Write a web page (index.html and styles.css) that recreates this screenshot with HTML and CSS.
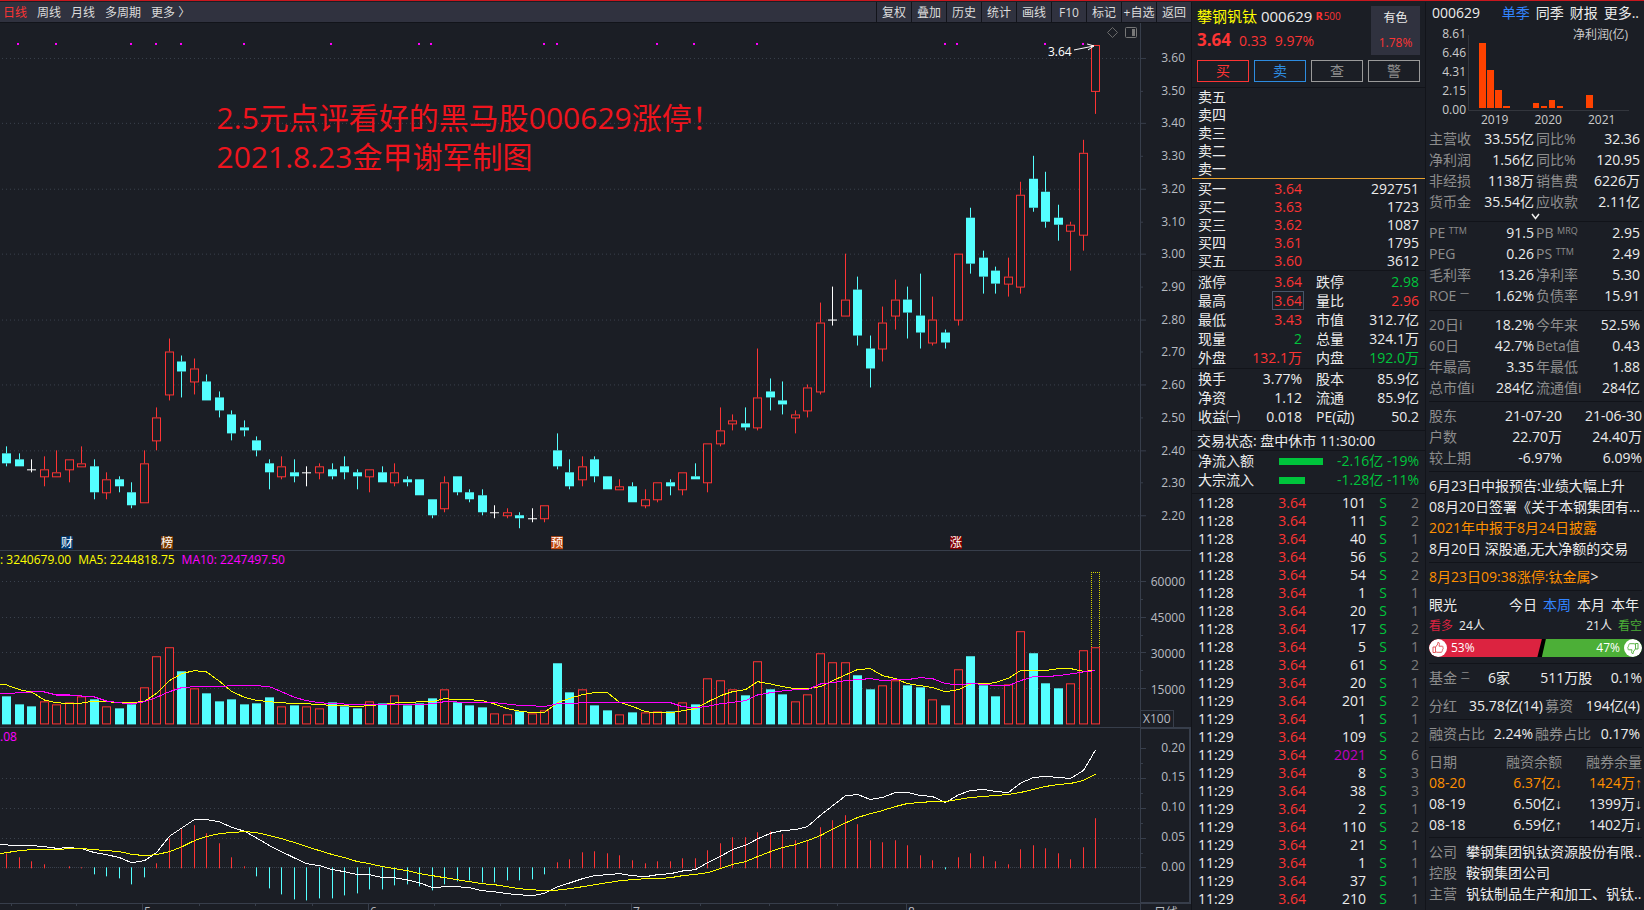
FILE: index.html
```html
<!DOCTYPE html>
<html lang="zh-CN">
<head>
<meta charset="utf-8">
<meta name="viewport" content="width=device-width, initial-scale=1">
<title>攀钢钒钛 000629</title>
<link rel="stylesheet" href="styles.css">
</head>
<body>
<main class="app">
  <section class="charts">
    <nav class="toolbar">
      <div class="periods">
        <button class="period active" type="button">日线</button>
        <button class="period" type="button">周线</button>
        <button class="period" type="button">月线</button>
        <button class="period" type="button">多周期</button>
        <button class="period" type="button">更多 〉</button>
      </div>
      <div class="tools">
        <button class="tool" type="button">复权</button>
        <button class="tool" type="button">叠加</button>
        <button class="tool" type="button">历史</button>
        <button class="tool" type="button">统计</button>
        <button class="tool" type="button">画线</button>
        <button class="tool" type="button">F10</button>
        <button class="tool" type="button">标记</button>
        <button class="tool" type="button">+自选</button>
        <button class="tool" type="button">返回</button>
      </div>
    </nav>

    <div class="panel panel-price">
      <div class="plot">
        <svg id="price" class="canvas" viewBox="0 0 1140 528" preserveAspectRatio="none"></svg>
        <p class="note">2.5元点评看好的黑马股000629涨停！<br>2021.8.23金甲谢军制图</p>
      </div>
      <ol class="axis axis-price">
        <li>3.60</li><li>3.50</li><li>3.40</li><li>3.30</li><li>3.20</li><li>3.10</li><li>3.00</li><li>2.90</li><li>2.80</li><li>2.70</li><li>2.60</li><li>2.50</li><li>2.40</li><li>2.30</li><li>2.20</li>
      </ol>
    </div>

    <div class="panel panel-volume">
      <div class="plot">
        <svg id="volume" class="canvas" viewBox="0 0 1140 175" preserveAspectRatio="none"></svg>
        <p class="legend"><span>: 3240679.00</span><span>MA5: 2244818.75</span><span class="magenta">MA10: 2247497.50</span></p>
      </div>
      <div class="axis-stack">
        <ol class="axis axis-volume">
          <li>60000</li><li>45000</li><li>30000</li><li>15000</li>
        </ol>
        <span class="unit">X100</span>
      </div>
    </div>

    <div class="panel panel-macd">
      <div class="plot">
        <svg id="macd" class="canvas" viewBox="0 0 1140 175" preserveAspectRatio="none"></svg>
        <p class="legend"><span class="magenta">.08</span></p>
      </div>
      <ol class="axis axis-macd">
        <li>0.20</li><li>0.15</li><li>0.10</li><li>0.05</li><li>0.00</li>
      </ol>
    </div>

    <div class="timeline">
      <svg id="time" class="time-canvas" viewBox="0 0 1140 6" preserveAspectRatio="none"></svg>
      <span class="time-unit">日线</span>
    </div>
  </section>

  <section class="quote">
    <header class="quote-head">
      <div class="head-main">
        <h1 class="name">攀钢钒钛 <span class="code">000629</span><span class="flag"><b>R</b>500</span></h1>
        <p class="last"><strong>3.64</strong><span>0.33</span><span>9.97%</span></p>
      </div>
      <div class="sector"><span>有色</span><span class="up">1.78%</span></div>
      <div class="actions">
        <button class="act buy" type="button">买</button>
        <button class="act sell" type="button">卖</button>
        <button class="act" type="button">查</button>
        <button class="act" type="button">警</button>
      </div>
    </header>

    <table class="book asks">
      <tr><th>卖五</th></tr><tr><th>卖四</th></tr><tr><th>卖三</th></tr><tr><th>卖二</th></tr><tr><th>卖一</th></tr>
    </table>
    <table class="book bids">
      <tr><th>买一</th><td class="up">3.64</td><td>292751</td></tr>
      <tr><th>买二</th><td class="up">3.63</td><td>1723</td></tr>
      <tr><th>买三</th><td class="up">3.62</td><td>1087</td></tr>
      <tr><th>买四</th><td class="up">3.61</td><td>1795</td></tr>
      <tr><th>买五</th><td class="up">3.60</td><td>3612</td></tr>
    </table>

    <dl class="stats">
      <dt>涨停</dt><dd class="up">3.64</dd><dt>跌停</dt><dd class="down">2.98</dd>
      <dt>最高</dt><dd class="up"><span class="boxed">3.64</span></dd><dt>量比</dt><dd class="up">2.96</dd>
      <dt>最低</dt><dd class="up">3.43</dd><dt>市值</dt><dd>312.7亿</dd>
      <dt>现量</dt><dd class="down">2</dd><dt>总量</dt><dd>324.1万</dd>
      <dt>外盘</dt><dd class="up">132.1万</dd><dt>内盘</dt><dd class="down">192.0万</dd>
    </dl>
    <dl class="stats stats-loose">
      <dt>换手</dt><dd>3.77%</dd><dt>股本</dt><dd>85.9亿</dd>
      <dt>净资</dt><dd>1.12</dd><dt>流通</dt><dd>85.9亿</dd>
      <dt>收益㈠</dt><dd>0.018</dd><dt>PE(动)</dt><dd>50.2</dd>
    </dl>
    <p class="status">交易状态: 盘中休市 11:30:00</p>
    <table class="flows">
      <tr><th>净流入额</th><td class="meter-cell"><span class="meter" style="width:44px"></span></td><td class="down">-2.16亿 -19%</td></tr>
      <tr><th>大宗流入</th><td class="meter-cell"><span class="meter" style="width:26px"></span></td><td class="down">-1.28亿 -11%</td></tr>
    </table>
    <table class="ticks">
      <colgroup><col class="c-time"><col class="c-price"><col class="c-vol"><col class="c-side"><col class="c-num"></colgroup>
      <tbody id="ticks"></tbody>
    </table>
  </section>

  <aside class="finance">
    <header class="fin-head">
      <span class="fin-code">000629</span>
      <nav class="fin-tabs"><a class="active" href="#q">单季</a><a href="#y">同季</a><a href="#r">财报</a><a href="#m">更多..</a></nav>
    </header>
    <div class="profit">
      <ol class="profit-axis"><li>8.61</li><li>6.46</li><li>4.31</li><li>2.15</li><li>0.00</li></ol>
      <div class="profit-body">
        <span class="profit-title">净利润(亿)</span>
        <svg class="profit-bars" viewBox="0 0 162 76" preserveAspectRatio="none">
          <path d="M.5 0V75.5H161" fill="none" stroke="#33363d"/>
          <path d="M11 8h7v65h-7zM19 35h7v38h-7zM27 55h7v18h-7zM35 71h7v2h-7zM65 68h6v5h-6zM73 71h6v2h-6zM81 65h6v8h-6zM89 71h6v2h-6zM118 60h7v13h-7z" fill="#ff4200"/>
        </svg>
        <div class="years"><span>2019</span><span>2020</span><span>2021</span></div>
      </div>
    </div>

    <dl class="kv first">
      <dt>主营收</dt><dd>33.55亿</dd><dt>同比%</dt><dd>32.36</dd>
      <dt>净利润</dt><dd>1.56亿</dd><dt>同比%</dt><dd>120.95</dd>
      <dt>非经损</dt><dd>1138万</dd><dt>销售费</dt><dd>6226万</dd>
      <dt>货币金</dt><dd>35.54亿</dd><dt>应收款</dt><dd>2.11亿</dd>
    </dl>
    <button class="more" type="button" aria-label="展开">
      <svg width="9" height="7" viewBox="0 0 9 7"><path d="M1 1l3.500 4.500L8 1" fill="none" stroke="#eee" stroke-width="1.500"/></svg>
    </button>
    <dl class="kv tight">
      <dt>PE <sup>TTM</sup></dt><dd>91.5</dd><dt>PB <sup>MRQ</sup></dt><dd>2.95</dd>
      <dt>PEG</dt><dd>0.26</dd><dt>PS <sup>TTM</sup></dt><dd>2.49</dd>
      <dt>毛利率</dt><dd>13.26</dd><dt>净利率</dt><dd>5.30</dd>
      <dt>ROE <sup>一</sup></dt><dd>1.62%</dd><dt>负债率</dt><dd>15.91</dd>
    </dl>
    <dl class="kv">
      <dt>20日i</dt><dd>18.2%</dd><dt>今年来</dt><dd>52.5%</dd>
      <dt>60日</dt><dd>42.7%</dd><dt>Beta值</dt><dd>0.43</dd>
      <dt>年最高</dt><dd>3.35</dd><dt>年最低</dt><dd>1.88</dd>
      <dt>总市值i</dt><dd>284亿</dd><dt>流通值i</dt><dd>284亿</dd>
    </dl>
    <table class="grid3">
      <tr><th>股东</th><td>21-07-20</td><td>21-06-30</td></tr>
      <tr><th>户数</th><td>22.70万</td><td>24.40万</td></tr>
      <tr><th>较上期</th><td>-6.97%</td><td>6.09%</td></tr>
    </table>
    <ul class="news">
      <li><a href="#n1">6月23日中报预告:业绩大幅上升</a></li>
      <li><a href="#n2">08月20日签署《关于本钢集团有...</a></li>
      <li><a class="hot" href="#n3">2021年中报于8月24日披露</a></li>
      <li><a href="#n4">8月20日 深股通,无大净额的交易</a></li>
    </ul>
    <p class="block"><a class="hot" href="#n5">8月23日09:38涨停:钛金属<span class="plain">&gt;</span></a></p>
    <div class="block sentiment">
      <div class="line"><span>眼光</span><nav class="spans"><a href="#d">今日</a><a class="active" href="#w">本周</a><a href="#mo">本月</a><a href="#yr">本年</a></nav></div>
      <div class="line votes"><span><b class="bull">看多</b>&ensp;24人</span><span>21人&ensp;<b class="bear">看空</b></span></div>
      <div class="poll">
        <span class="poll-side poll-bull" style="flex-grow:53">
          <svg width="18" height="18" viewBox="0 0 18 18"><circle cx="9" cy="9" r="9" fill="#fff"/><path d="M4 8h2.500v5.500H4zM6.500 8.200L8.800 5V3.500c1.700-.4 2 1 1.200 3.700h3.200c1 0 1 1 .7 1.600.5.500.3 1.200-.2 1.500.3.600 0 1.200-.5 1.400.1.800-.3 1.600-1.200 1.600H8l-1.500-.6" fill="none" stroke="#e0484e" stroke-width=".9"/></svg>
          53%
        </span>
        <span class="poll-side poll-bear" style="flex-grow:47">
          47%
          <svg width="18" height="18" viewBox="0 0 18 18"><circle cx="9" cy="9" r="9" fill="#fff"/><path d="M14 10h-2.500V4.500H14zM11.500 9.800L9.200 13v1.500c-1.700.4-2-1-1.200-3.700H4.800c-1 0-1-1-.7-1.600-.5-.5-.3-1.200.2-1.500-.3-.6 0-1.200.5-1.400-.1-.8.300-1.600 1.200-1.600h4l1.500.6" fill="none" stroke="#4caf37" stroke-width=".9"/></svg>
        </span>
      </div>
    </div>
    <div class="block line"><span class="dim">基金 <sup>二</sup></span><span class="fund-n">6家</span><span>511万股</span><span>0.1%</span></div>
    <div class="block pairs pairs-a"><span class="dim">分红</span><span>35.78亿(14)</span><span class="dim">募资</span><span>194亿(4)</span></div>
    <div class="block pairs pairs-b"><span class="dim">融资占比</span><span>2.24%</span><span class="dim">融券占比</span><span>0.17%</span></div>
    <table class="grid3 margin">
      <tr class="dim"><th>日期</th><td>融资余额</td><td>融券余量</td></tr>
      <tr class="hot"><th>08-20</th><td>6.37亿↓</td><td>1424万↑</td></tr>
      <tr class="lit"><th>08-19</th><td>6.50亿↓</td><td>1399万↓</td></tr>
      <tr class="lit"><th>08-18</th><td>6.59亿↑</td><td>1402万↓</td></tr>
    </table>
    <dl class="about">
      <dt>公司</dt><dd>攀钢集团钒钛资源股份有限..</dd>
      <dt>控股</dt><dd>鞍钢集团公司</dd>
      <dt>主营</dt><dd>钒钛制品生产和加工、钒钛..</dd>
    </dl>
  </aside>
</main>
<script src="charts.js"></script>
</body>
</html>
```

FILE: styles.css
```css
* { box-sizing: border-box; }

:root {
  --bg: #1b1e25;
  --line: #373e4b;
  --edge: #12141a;
  --red: #fc3434;
  --green: #00c43c;
  --text: #ececec;
  --dim: #8d8d8d;
  --hot: #ff9000;
  --blue: #3284ff;
}

body, h1, p, ol, ul, dl, dd { margin: 0; padding: 0; }
ol, ul { list-style: none; }
h1, th, b { font-weight: 400; }
th { text-align: left; }
table { border-collapse: collapse; width: 100%; table-layout: fixed; }
th, td { padding: 0; }
a { color: inherit; text-decoration: none; }
button { font: inherit; color: inherit; background: none; border: 0; padding: 0; cursor: pointer; }

body {
  background: var(--bg);
  color: var(--text);
  font-family: "Open Sans", "Noto Sans CJK SC", sans-serif;
  font-size: 14px;
  overflow: hidden;
}

.app {
  display: flex;
  height: 100vh;
  border-top: 1px solid #c8171e;
  padding-top: 1px;
  white-space: nowrap;
}

.up { color: var(--red); }
.down { color: var(--green); }
.dim, .dim th, .dim td { color: var(--dim); }
.hot, .hot th, .hot td { color: var(--hot); }
.magenta { color: #f0f; }

/* chart column */
.charts { flex: 1; min-width: 0; display: flex; flex-direction: column; font-size: 12px; }

.toolbar {
  display: flex;
  justify-content: space-between;
  height: 21px;
  background: #30323f;
  border-bottom: 1px solid var(--edge);
  color: #dcdcdc;
}
.periods { display: flex; gap: 10px; padding-left: 3px; }
.period.active { color: var(--red); }
.tools { display: flex; }
.tool { width: 35px; border-left: 1px solid var(--edge); overflow: hidden; }

.panel { display: flex; min-height: 0; border-bottom: 1px solid var(--line); }
.panel-price { flex: 529 1 0; }
.panel-volume, .panel-macd { flex: 176 1 0; }
.plot { flex: 1; min-width: 0; position: relative; }
.canvas { display: block; position: absolute; width: 100%; height: 100%; overflow: visible; }

.note {
  position: absolute;
  left: 19%;
  top: 75px;
  font-size: 30px;
  line-height: 39px;
  color: #ee141d;
}
.legend { position: relative; display: flex; gap: 7px; line-height: 17px; color: #ff0; }

.axis {
  width: 51px;
  border-left: 1px solid var(--line);
  padding-right: 6px;
  display: flex;
  flex-direction: column;
  justify-content: space-between;
  text-align: right;
  line-height: 18px;
  color: #b9bcc2;
}
.axis-price { padding-top: 26px; padding-bottom: 25px; }
.axis-stack { display: flex; flex-direction: column; align-items: flex-start; }
.axis-volume { flex: 1; padding-top: 22px; padding-bottom: 11px; }
.unit {
  border: 1px solid var(--line);
  border-bottom: 0;
  padding: 0 2px;
  line-height: 16px;
  color: #b9bcc2;
}
.axis-macd { border: 1px solid var(--line); border-right-width: 2px; padding-top: 10px; padding-bottom: 26px; padding-right: 4px; }

.timeline { display: flex; height: 6px; overflow: hidden; color: #b9bcc2; }
.time-canvas { flex: 1; min-width: 0; height: 6px; }
.time-unit { width: 51px; padding-left: 13px; line-height: 18px; border-left: 1px solid var(--line); }

/* quote column */
.quote {
  flex: 0 0 235px;
  border-left: 1px solid var(--edge);
  border-right: 1px solid var(--edge);
  overflow: hidden;
}
.quote-head {
  display: grid;
  grid-template-columns: 1fr 49px;
  padding: 4px 5px 5px 5px;
  border-bottom: 1px solid var(--edge);
}
.name { font-size: 15px; line-height: 20px; color: #ff0; }
.code { color: var(--text); }
.flag { font-size: 10px; color: var(--red); margin-left: 3px; vertical-align: 2px; }
.flag b { font-weight: 700; font-size: 11px; margin-right: 1px; }
.last { display: flex; gap: 8px; align-items: baseline; line-height: 28px; color: var(--red); }
.last strong { font-size: 17px; }
.sector {
  display: flex;
  flex-direction: column;
  justify-content: space-around;
  text-align: center;
  background: #30323f;
  font-size: 12px;
  line-height: 24px;
}
.actions { grid-column: 1 / -1; display: flex; gap: 5px; margin-top: 5px; }
.act { flex: 1; height: 22px; line-height: 18px; border: 1px solid #9a9a9a; color: #8d8d8d; }
.act.buy { color: var(--red); border-color: var(--red); }
.act.sell { color: #2d8ce0; border-color: #2d8ce0; }

.book { line-height: 18px; }
.book th { width: 53px; padding-left: 6px; }
.book td { text-align: right; padding-right: 6px; }
.book td.up { width: 57px; padding-right: 0; }
.asks { border-bottom: 1px solid #e8a22e; }
.bids { border-bottom: 1px solid var(--edge); }
.bids tr:first-child > * { padding-top: 1px; }

.stats {
  display: grid;
  grid-template-columns: 48px 56px 48px 1fr;
  padding: 1px 6px 1px 6px;
  border-bottom: 1px solid var(--edge);
  line-height: 19px;
}
.stats dt:nth-of-type(even) { margin-left: 14px; }
.stats dd { text-align: right; }
.stats-loose { padding-top: 0; padding-bottom: 4px; }
.boxed { display: inline-block; line-height: 17px; padding: 0 1px; margin-right: -2px; border: 1px solid #48566a; }
.status { padding-left: 5px; line-height: 19px; border-bottom: 1px solid var(--edge); }
.flows { line-height: 19px; border-bottom: 1px solid var(--edge); }
.flows th { width: 87px; padding-left: 6px; }
.flows td { text-align: right; padding-right: 6px; }
.flows .meter-cell { width: 50px; text-align: left; }
.flows tr:last-child > * { padding-bottom: 4px; }
.meter { display: inline-block; height: 7px; background: var(--green); vertical-align: 1px; }

.ticks { line-height: 18px; text-align: right; }
.ticks td:first-child { text-align: left; padding-left: 6px; }
.ticks td:nth-child(4) { text-align: center; }
.ticks td:last-child { padding-right: 6px; color: #7c7c7c; }
.c-time { width: 60px; }
.c-price { width: 54px; }
.c-vol { width: 60px; }
.c-side { width: 34px; }
.big { color: #c000c0; }

/* finance column */
.finance { flex: 0 0 218px; padding: 0 2px 0 3px; overflow: hidden; line-height: 21px; }
.fin-head { display: flex; justify-content: space-between; padding: 0 3px 0 3px; }
.fin-tabs, .spans { display: flex; gap: 6px; }
.fin-tabs .active, .spans .active { color: var(--blue); }
.spans { padding-right: 3px; }

.profit { display: flex; gap: 2px; font-size: 12px; height: 105px; color: #ccc; }
.profit-axis { width: 37px; text-align: right; line-height: 19px; padding-top: 1px; }
.profit-body { flex: 1; padding-top: 12px; position: relative; }
.profit-title { position: absolute; top: 1px; right: 14px; }
.profit-bars { display: block; width: 162px; height: 76px; }
.years { display: flex; gap: 26px; padding-left: 13px; line-height: 18px; }

.kv { display: grid; grid-template-columns: 52px 53px 54px 1fr; padding: 3px 2px 3px 0; border-top: 1px solid #111319; }
.kv dt { color: var(--dim); }
.kv dt:nth-of-type(even) { padding-left: 2px; }
.kv dd { text-align: right; }
.kv.first { border-top: 0; padding-top: 0; padding-bottom: 0; }
.kv.tight { padding-top: 0; padding-bottom: 4px; }
.more { display: block; width: 100%; height: 9px; line-height: 1; }
.more svg { display: block; margin: 0 auto; }
sup { font-size: 9px; line-height: 1; vertical-align: 4px; }

.grid3 { border-top: 1px solid #111319; border-bottom: 3px solid transparent; }
.grid3 tr:first-child > * { padding-top: 3px; }
.grid3 th { width: 53px; color: var(--dim); }
.grid3 .hot th { color: var(--hot); }
.grid3 .lit th { color: var(--text); }
.grid3 td { text-align: right; }
.margin { border-bottom-width: 2px; font-family: "Open Sans", "Liberation Sans", "Noto Sans CJK SC", sans-serif; }

.news, .block, .about { border-top: 1px solid #111319; padding: 3px 0; }
.plain { color: var(--text); }
.line { display: flex; justify-content: space-between; }
.pairs { display: grid; }
.pairs > :nth-child(even) { text-align: right; }
.pairs > :nth-child(3) { padding-left: 2px; }
.pairs-a { grid-template-columns: 32px 82px 32px 1fr; padding-right: 2px; }
.pairs-b { grid-template-columns: 58px 46px 60px 1fr; padding-right: 2px; }
.votes { font-size: 12px; }
.bull { color: #dc2340; }
.bear { color: #4caf37; }
.sentiment { padding-bottom: 6px; }
.poll { display: flex; margin-top: 3px; height: 18px; border-radius: 9px; background: #000; overflow: hidden; font-size: 12px; line-height: 18px; color: #fff; }
.poll-side { flex-basis: 0; display: flex; gap: 4px; }
.poll-bull { background: #dc2340; clip-path: polygon(0 0, 100% 0, 96% 100%, 0 100%); }
.poll-bear { background: #4caf37; justify-content: flex-end; clip-path: polygon(4% 0, 100% 0, 100% 100%, 0 100%); }
.fund-n { margin-right: 12px; }
.about { display: grid; grid-template-columns: 37px 1fr; padding-bottom: 0; }
.about dt { color: var(--dim); }
```

FILE: charts.js
```js
const NS = 'http://www.w3.org/2000/svg';
const RED = '#fc3434', CYAN = '#54ffff', WHITE = '#ffffff', GRID = '#3a414d', AXIS = '#373e4b';

/* kind, high, body top, body bottom, low; prices in cents */
const CANDLES = `c 241 239 236 235|c 239 237 235 235|wc 237 234 234 233|r 238 234 232 229|r 240 233 232 232|r 237 237 234 230
r 241 236 235 235|c 237 235 227 225|r 233 231 227 225|c 232 231 229 227|c 230 227 223 222|r 240 236 224 224
r 253 250 243 240|r 274 270 257 255|c 269 267 264 256|r 268 265 261 257|c 263 261 255 255|c 258 256 252 250
c 252 251 245 243|c 249 247 246 244|c 244 243 240 238|c 237 236 233 228|r 238 235 232 231|c 237 233 232 230
wr 235 233 233 229|r 236 235 233 231|c 236 234 232 231|c 238 235 233 231|c 234 233 232 228|r 234 234 232 227
c 235 233 230 230|r 236 233 230 229|c 232 231 230 229|c 231 231 226 226|c 225 225 220 219|r 232 230 222 221
c 232 232 227 226|c 228 227 225 224|c 228 226 221 220|wr 223 221 221 219|r 222 221 220 219|c 221 220 219 216
wr 222 219 219 218|r 223 223 219 218|c 245 240 235 234|c 237 233 229 228|r 238 235 231 229|c 238 237 232 230
c 232 232 228 228|r 231 229 228 228|c 230 229 224 224|r 228 225 223 222|r 230 230 225 224|c 231 230 229 226
r 233 233 228 226|c 236 232 231 231|r 242 242 230 227|r 253 246 242 241|r 251 249 248 246|c 253 248 247 246
r 271 256 247 246|c 262 258 256 252|c 261 255 254 251|r 252 251 250 245|r 260 259 252 250|r 285 279 258 257
wr 290 280 280 278|r 300 286 281 281|c 293 289 275 272|c 275 271 265 259|r 284 279 271 267|r 292 286 281 277
c 290 286 282 274|c 294 281 276 271|r 287 280 273 272|c 277 276 273 271|r 300 300 280 278|c 314 311 297 294
c 301 299 293 288|c 296 295 291 288|r 299 293 291 287|r 322 318 290 288|c 330 323 314 313|c 325 319 310 308
c 315 311 309 304|r 310 309 307 295|r 335 331 306 301|r 364 364 350 343`.split(/[|\n]/).map(s => {
  const [kind, ...p] = s.split(' ');
  return [kind, ...p.map(Number)];
});

/* all series below count thirds of a unit */
const VOLUME = [84,60,54,68,60,65,83,75,53,48,60,111,203,230,159,108,93,69,75,60,63,81,53,57,53,47,66,54,48,68,63,86,57,63,78,104,66,57,51,32,29,39,32,41,183,96,105,57,42,29,36,35,38,39,65,60,137,131,104,87,188,105,90,68,89,212,185,185,147,105,116,131,117,111,74,57,164,204,117,84,119,278,213,123,108,122,221,231];
const MA5 = [407,421,428,452,460,463,461,455,457,460,460,456,432,394,373,364,368,396,426,444,453,457,460,463,463,466,468,469,472,468,466,461,460,457,457,448,451,451,454,464,478,485,490,489,460,447,436,430,430,459,471,487,490,490,484,478,458,439,427,421,397,404,412,418,418,412,394,377,361,358,379,388,403,409,415,427,421,404,404,400,387,364,364,364,358,358,366,364];
const MA10 = [433,430,428,428,437,437,440,443,455,460,464,457,444,427,415,412,412,412,409,409,409,412,427,444,454,460,463,464,466,466,466,466,466,466,463,457,458,458,458,460,464,468,469,472,463,463,460,460,460,460,460,460,460,460,472,475,471,463,459,454,437,430,425,421,421,404,400,394,391,388,394,391,391,385,388,403,406,403,405,409,409,394,382,382,379,374,368,364];
const HIST = [41,31,19,10,0,4,1,-20,-26,-32,-50,-29,13,86,113,125,101,71,31,4,-26,-62,-80,-95,-98,-92,-92,-83,-77,-65,-65,-53,-50,-56,-68,-50,-41,-38,-44,-44,-38,-38,-35,-20,16,25,46,49,43,37,22,13,19,19,28,28,52,73,91,91,106,109,100,82,82,121,142,157,130,82,76,82,67,37,22,-5,31,43,34,19,10,55,67,58,43,25,61,148];
const DIF = [884,886,886,889,894,892,895,907,913,922,937,931,907,858,834,808,808,815,831,843,863,886,904,923,940,946,958,964,973,973,982,982,989,997,1012,1009,1009,1012,1021,1024,1030,1033,1036,1029,1009,998,985,976,973,970,976,979,973,970,962,958,937,918,898,885,866,849,841,838,829,795,767,737,733,748,742,727,727,736,739,757,734,721,718,724,727,699,682,679,682,685,661,600];
const DEA = [907,901,898,898,898,895,895,898,901,904,912,916,913,904,890,871,859,850,847,844,847,856,865,877,889,901,913,922,934,940,949,955,961,970,976,982,988,994,1000,1003,1009,1015,1018,1021,1019,1015,1009,1003,997,991,988,985,985,982,976,972,967,955,942,934,919,904,892,883,871,856,837,818,802,790,781,769,760,757,754,754,748,742,739,736,733,727,718,709,703,700,691,673];

const at = i => Math.round(6 + i * 12.52);

function add(svg, tag, attrs, text) {
  const el = document.createElementNS(NS, tag);
  for (const k in attrs) el.setAttribute(k, attrs[k]);
  if (text) el.textContent = text;
  svg.appendChild(el);
}
function hline(svg, y, dash = '1 3') {
  add(svg, 'path', { d: `M2 ${y + .5}H1140`, stroke: GRID, 'stroke-dasharray': dash, 'shape-rendering': 'crispEdges' });
}
function tick(svg, y, len) {
  add(svg, 'path', { d: `M1140 ${y + .5}h${len}`, stroke: AXIS, 'shape-rendering': 'crispEdges' });
}
function box(svg, x, y, h, color, solid) {
  add(svg, 'rect', solid
    ? { x: x - 4, y, width: 9, height: Math.max(1, h), fill: color }
    : { x: x - 3.5, y: y + .5, width: 8, height: Math.max(2, h), fill: '#1b1e25', stroke: color });
}
function wick(svg, x, y1, y2, color) {
  if (y2 > y1) add(svg, 'rect', { x, y: y1, width: 1, height: y2 - y1, fill: color });
}
function curve(svg, points, color) {
  add(svg, 'polyline', { points: points.map(p => p.join()).join(' '), fill: 'none', stroke: color, 'shape-rendering': 'crispEdges' });
}

function drawPrice() {
  const svg = document.getElementById('price');
  const y = p => Math.round(35 + (360 - p) * 3.2714);
  for (let p = 360; p >= 220; p -= 10) {
    const major = p % 20 === 0;
    if (major) hline(svg, y(p));
    tick(svg, y(p), major ? 6 : 3);
  }
  for (const x of [18, 56, 131, 156, 181, 244, 331, 419, 431, 544, 557, 657, 694, 757, 945, 957, 1045, 1083])
    add(svg, 'rect', { x: x - 1, y: 20, width: 2, height: 2, fill: '#f0f' });

  CANDLES.forEach(([kind, hi, top, bot, lo], i) => {
    const x = at(i);
    if (kind[0] === 'w') {
      wick(svg, x, y(hi), y(lo), WHITE);
      add(svg, 'rect', { x: x - 4, y: y(top), width: 9, height: 1, fill: WHITE });
      return;
    }
    const color = kind === 'r' ? RED : CYAN;
    wick(svg, x, y(hi), y(top), color);
    wick(svg, x, y(bot), y(lo), color);
    box(svg, x, y(top), y(bot) - y(top), color, kind === 'c');
  });

  const badges = [[61, '财', '#003a70'], [161, '榜', '#7d3c00'], [551, '预', '#c04a10'], [950, '涨', '#820000']];
  for (const [x, label, fill] of badges) {
    add(svg, 'rect', { x, y: 514, width: 12, height: 13, fill });
    add(svg, 'text', { x: x + 6, y: 525, fill: WHITE, 'font-size': 12, 'text-anchor': 'middle' }, label);
  }
  add(svg, 'text', { x: 1048, y: 33, fill: WHITE, 'font-size': 12 }, '3.64');
  add(svg, 'path', { d: 'M1074 27L1094 23M1087 21L1094 23L1088 27', fill: 'none', stroke: WHITE });
  add(svg, 'path', { d: 'M1112.5 4.500l5 5-5 5-5-5z', fill: 'none', stroke: '#6a6a6a' });
  add(svg, 'rect', { x: 1125.5, y: 4.5, width: 11, height: 10, rx: 1, fill: 'none', stroke: '#777' });
  add(svg, 'rect', { x: 1132, y: 6, width: 3, height: 7, fill: '#777' });
}

function drawVolume() {
  const svg = document.getElementById('volume');
  const y = v => v / 3 - 2;
  [30, 66, 101, 137].forEach(g => { hline(svg, g); tick(svg, g, 6); });
  [48, 84, 119].forEach(g => tick(svg, g, 3));
  VOLUME.forEach((v, i) => {
    const kind = CANDLES[i][0];
    const solid = kind === 'c' || kind === 'wc';
    const h = Math.round(v / 3);
    box(svg, at(i), 173 - h, solid ? h : h - 1, solid ? CYAN : RED, solid);
  });
  add(svg, 'path', { d: 'M1091.5 96V21.500H1099.500V96', fill: 'none', stroke: '#d8d800', 'stroke-dasharray': '1 1', 'shape-rendering': 'crispEdges' });
  curve(svg, [[0, y(406)], ...MA5.map((v, i) => [at(i) + .5, y(v)])], '#ff0');
  curve(svg, [[0, y(433)], ...MA10.map((v, i) => [at(i) + .5, y(v)])], '#f0f');
}

function drawMacd() {
  const svg = document.getElementById('macd');
  const y = v => v / 3 - 178;
  [50, 80, 110].forEach(g => hline(svg, g));
  hline(svg, 139, '1 1');
  [20, 50, 80, 110, 139].forEach(g => tick(svg, g, 6));
  [35, 65, 95, 125].forEach(g => tick(svg, g, 3));
  HIST.forEach((v, i) => {
    const h = Math.round(Math.abs(v) / 3);
    if (v > 0) wick(svg, at(i), 139 - h, 140, RED);
    if (v < 0) wick(svg, at(i), 139, 139 + h, CYAN);
  });
  curve(svg, [[0, y(883)], ...DIF.map((v, i) => [at(i) + .5, y(v)])], WHITE);
  curve(svg, [[0, y(910)], ...DEA.map((v, i) => [at(i) + .5, y(v)])], '#ff0');
}

function drawTime() {
  const svg = document.getElementById('time');
  for (const x of [11, 76, 199, 255, 312, 434, 500, 565, 700, 769, 837])
    add(svg, 'rect', { x, y: 0, width: 1, height: 2, fill: AXIS });
  for (const [x, label] of [[142, '5'], [368, '6'], [631, '7'], [906, '8']]) {
    add(svg, 'rect', { x, y: 0, width: 1, height: 6, fill: AXIS });
    add(svg, 'text', { x: x + 2, y: 12, fill: '#b9bcc2', 'font-size': 12 }, label);
  }
}

function fillTicks() {
  const rows = [[101,2],[11,2],[40,1],[56,2],[54,2],[1,1],[20,1],[17,2],[5,1],[61,2],[20,1],[201,2],[1,1],[109,2],[2021,6],[8,3],[38,3],[2,1],[110,2],[21,1],[1,1],[37,1],[210,1]];
  document.getElementById('ticks').innerHTML = rows.map(([vol, n], i) =>
    `<tr><td>11:${i < 10 ? 28 : 29}</td><td class="up">3.64</td><td${vol > 2000 ? ' class="big"' : ''}>${vol}</td><td class="down">S</td><td>${n}</td></tr>`).join('');
}

drawPrice();
drawVolume();
drawMacd();
drawTime();
fillTicks();
```
